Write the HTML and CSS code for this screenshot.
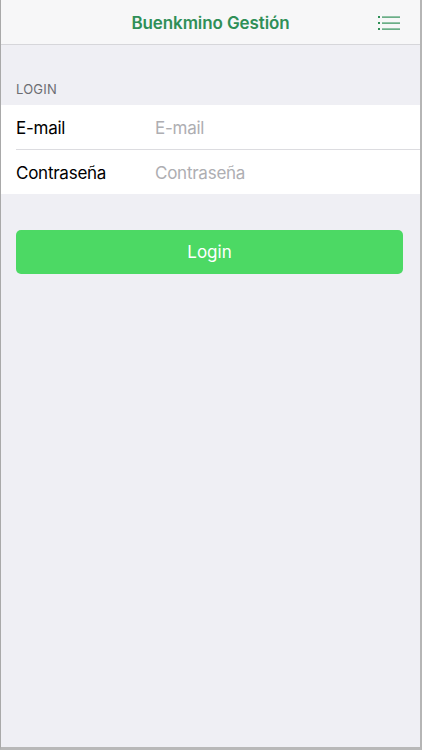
FILE: index.html
```html
<!DOCTYPE html>
<html>
<head>
  <title>Buenkmino Gestión</title>
  <link rel="stylesheet" href="styles.css">
</head>
<body>
  <div id="screen">
    <div class="navbar">
      <h1 class="nav-title">Buenkmino Gestión</h1>
      <button class="nav-menu" aria-label="Menú">
        <svg width="22" height="14" viewBox="0 0 22 14">
          <rect x="0" y="0" width="2" height="2" fill="#2f8f57"/>
          <rect x="0" y="6" width="2" height="2" fill="#2f8f57"/>
          <rect x="0" y="12" width="2" height="2" fill="#2f8f57"/>
          <rect x="4" y="0.5" width="18" height="1.2" fill="#2f8f57"/>
          <rect x="4" y="6.5" width="18" height="1.2" fill="#2f8f57"/>
          <rect x="4" y="12.5" width="18" height="1.2" fill="#2f8f57"/>
        </svg>
      </button>
    </div>

    <div class="section-header">LOGIN</div>
    <div class="form-group">
      <label class="form-row">
        <span class="form-label">E-mail</span>
        <input type="email" class="form-input" placeholder="E-mail">
      </label>
      <label class="form-row">
        <span class="form-label">Contraseña</span>
        <input type="password" class="form-input" placeholder="Contraseña">
      </label>
    </div>

    <div class="actions">
      <button class="btn-login">Login</button>
    </div>
  </div>
</body>
</html>
```

FILE: styles.css
```css
html, body {
  margin: 0;
  padding: 0;
  height: 100%;
}

body {
  font-family: Inter, "Liberation Sans", sans-serif;
  background-color: #bdbdbd;
}

#screen {
  box-sizing: border-box;
  height: 750px;
  background-color: #efeff4;
  border-left: 1px solid #a9a9a9;
  border-right: 2px solid #b5b5b5;
  border-bottom: 3px solid #b8b8b8;
}

.navbar {
  box-sizing: border-box;
  height: 45px;
  padding-top: 2px;
  background-color: #f7f7f8;
  border-bottom: 1px solid #d6d6da;
  display: flex;
  align-items: center;
  justify-content: center;
  position: relative;
}

.nav-title {
  margin: 0;
  font-size: 17px;
  font-weight: 600;
  letter-spacing: -0.1px;
  color: #2f8f57;
}

.nav-menu {
  position: absolute;
  right: 20px;
  top: 16px;
  padding: 0;
  border: none;
  background: none;
  line-height: 0;
}

.section-header {
  padding: 36px 16px 8px 15px;
  font-size: 13px;
  color: #6d6d72;
  letter-spacing: 0.2px;
}

.form-group {
  background-color: #fff;
}

.form-row {
  display: flex;
  align-items: center;
  height: 43px;
  padding-top: 1px;
  margin-left: 15px;
}

.form-row + .form-row {
  border-top: 1px solid #dcdce0;
}

.form-label {
  width: 142px;
  font-size: 17px;
  letter-spacing: -0.25px;
  color: #000;
}

.form-input {
  flex: 1;
  border: none;
  outline: none;
  padding: 0;
  font-family: inherit;
  font-size: 17px;
  letter-spacing: -0.25px;
  color: #000;
  background: transparent;
}

.form-input::placeholder {
  color: #aeaeb2;
}

.actions {
  padding: 36px 17px 0 15px;
}

.btn-login {
  width: 100%;
  height: 44px;
  border: none;
  border-radius: 5px;
  background-color: #4cd964;
  color: #fff;
  font-family: inherit;
  font-size: 17px;
  cursor: pointer;
}
```
